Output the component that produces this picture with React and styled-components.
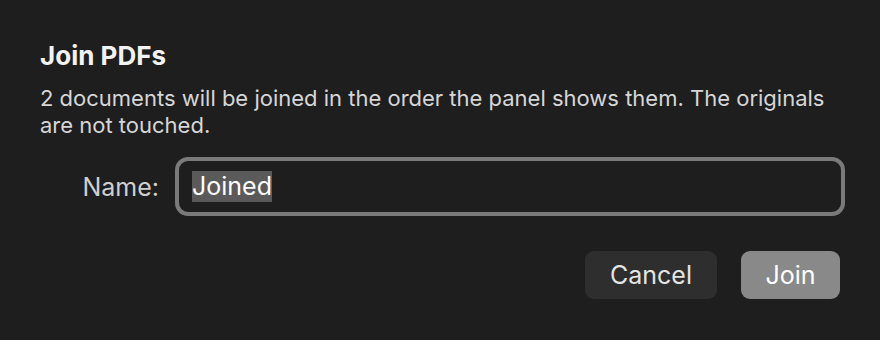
import React from 'react'
import styled, { createGlobalStyle } from 'styled-components'

const GlobalStyle = createGlobalStyle`
  html, body {
    margin: 0;
    padding: 0;
    background: #1e1e1e;
  }
  body {
    font-family: Inter, "Noto Sans", "Liberation Sans", sans-serif;
    -webkit-font-smoothing: antialiased;
  }
`

const Dialog = styled.div`
  width: 880px;
  height: 340px;
  box-sizing: border-box;
  padding: 40px 35px 0 40px;
  background: #1e1e1e;
  display: flex;
  flex-direction: column;
`

const Title = styled.h1`
  margin: 0;
  font-size: 26px;
  line-height: 32px;
  font-weight: 700;
  color: #f2f2f2;
`

const Message = styled.p`
  margin: 13px 0 0;
  font-size: 22px;
  line-height: 27px;
  color: #d6d6d6;
  max-width: 800px;
`

const FieldRow = styled.div`
  display: flex;
  align-items: center;
  margin-top: 18px;
  gap: 16px;
`

const Label = styled.label`
  width: 119px;
  text-align: right;
  font-size: 25px;
  color: #cfcfcf;
`

const InputBox = styled.div`
  flex: 1;
  height: 59px;
  box-sizing: border-box;
  border: 4px solid #7a7a7a;
  border-radius: 13px;
  display: flex;
  align-items: center;
  padding-left: 13px;
`

const Selected = styled.span`
  background: #5a5a5a;
  color: #ffffff;
  font-size: 25px;
  line-height: 31px;
`

const Actions = styled.div`
  display: flex;
  justify-content: flex-end;
  gap: 24px;
  margin-top: 35px;
  margin-right: 5px;
`

const Button = styled.button`
  height: 48px;
  width: ${p => p.$width}px;
  border: none;
  border-radius: 9px;
  font-family: inherit;
  font-size: 25px;
  background: ${p => (p.$primary ? '#898989' : '#2e2e2e')};
  color: ${p => (p.$primary ? '#ffffff' : '#e4e4e4')};
  padding: 0;
`

export default function App() {
  return (
    <>
      <GlobalStyle />
      <Dialog>
        <Title>Join PDFs</Title>
        <Message>
          2 documents will be joined in the order the panel shows them. The originals are not touched.
        </Message>
        <FieldRow>
          <Label>Name:</Label>
          <InputBox>
            <Selected>Joined</Selected>
          </InputBox>
        </FieldRow>
        <Actions>
          <Button $width={132}>Cancel</Button>
          <Button $width={99} $primary>Join</Button>
        </Actions>
      </Dialog>
    </>
  )
}
